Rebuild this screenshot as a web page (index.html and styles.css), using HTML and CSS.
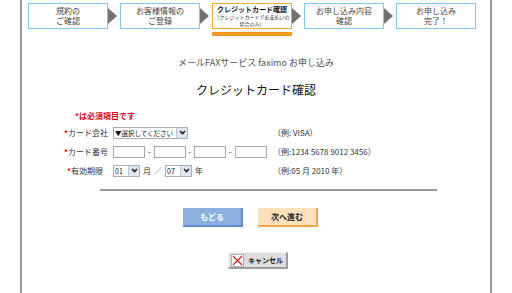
FILE: index.html
```html
<!DOCTYPE html>
<html lang="ja">

<head>
    <meta charset="UTF-8">
    <meta name="viewport" content="width=device-width, initial-scale=1.0">
    <title>クレジットカード確認</title>
    <link rel="stylesheet" href="styles.css">
</head>

<body>
    <div class="page">
        <!-- Progress steps -->
        <ol class="steps">
            <li class="step">
                <div class="step-box">規約の<br>ご確認</div>
                <div class="step-bar"></div>
            </li>
            <li class="arrow"></li>
            <li class="step">
                <div class="step-box">お客様情報の<br>ご登録</div>
                <div class="step-bar"></div>
            </li>
            <li class="arrow"></li>
            <li class="step current">
                <div class="step-box">
                    <span class="step-title">クレジットカード確認</span>
                    <span class="step-sub">（クレジットカードでお支払いの<br>場合のみ）</span>
                </div>
                <div class="step-bar"></div>
            </li>
            <li class="arrow"></li>
            <li class="step">
                <div class="step-box">お申し込み内容<br>確認</div>
                <div class="step-bar"></div>
            </li>
            <li class="arrow"></li>
            <li class="step">
                <div class="step-box">お申し込み<br>完了！</div>
                <div class="step-bar"></div>
            </li>
        </ol>

        <p class="service">メールFAXサービス faximo お申し込み</p>
        <h1>クレジットカード確認</h1>

        <form class="card-form" onsubmit="return false;">
            <p class="required-note"><span class="mark">*</span>は必須項目です</p>

            <div class="row">
                <span class="label"><span class="mark">*</span>カード会社</span>
                <div class="field">
                    <span class="select select-card">
                        <span class="select-text">▼選択してください</span>
                        <span class="select-btn"><svg width="7" height="5" viewBox="0 0 7 5"><path d="M1 1 L3.5 3.6 L6 1" fill="none" stroke="#222" stroke-width="1.6"/></svg></span>
                    </span>
                </div>
                <span class="example">（例: VISA）</span>
            </div>

            <div class="row">
                <span class="label"><span class="mark">*</span>カード番号</span>
                <div class="field">
                    <input class="num" type="text">
                    <span class="dash">-</span>
                    <input class="num" type="text">
                    <span class="dash">-</span>
                    <input class="num" type="text">
                    <span class="dash">-</span>
                    <input class="num" type="text">
                </div>
                <span class="example">（例:1234 5678 9012 3456）</span>
            </div>

            <div class="row">
                <span class="label"><span class="mark">*</span>有効期限</span>
                <div class="field field-date">
                    <span class="select select-small">
                        <span class="select-text">01</span>
                        <span class="select-btn"><svg width="7" height="5" viewBox="0 0 7 5"><path d="M1 1 L3.5 3.6 L6 1" fill="none" stroke="#222" stroke-width="1.6"/></svg></span>
                    </span>
                    <span class="unit">月</span>
                    <span class="slash">／</span>
                    <span class="select select-small">
                        <span class="select-text">07</span>
                        <span class="select-btn"><svg width="7" height="5" viewBox="0 0 7 5"><path d="M1 1 L3.5 3.6 L6 1" fill="none" stroke="#222" stroke-width="1.6"/></svg></span>
                    </span>
                    <span class="unit">年</span>
                </div>
                <span class="example">（例:05 月 2010 年）</span>
            </div>
        </form>

        <hr class="divider">

        <div class="actions">
            <button type="button" class="btn btn-back">もどる</button>
            <button type="button" class="btn btn-next">次へ進む</button>
        </div>

        <div class="cancel-row">
            <button type="button" class="btn btn-cancel">
                <span class="cancel-icon"><svg width="11" height="11" viewBox="0 0 11 11"><path d="M1 1 L10 10 M10 1 L1 10" stroke="#e8141c" stroke-width="1.2"/></svg></span>
                <span>キャンセル</span>
            </button>
        </div>
    </div>
</body>

</html>
```

FILE: styles.css
```css
/* General Styles */
body {
    margin: 0;
    font-family: "Noto Sans CJK JP", "Liberation Sans", sans-serif;
    color: #333;
    background-color: #fff;
}

.page {
    margin: 0 20px;
    min-height: 293px;
    box-sizing: border-box;
    border-left: 2px solid #9a9a9a;
    border-right: 2px solid #9a9a9a;
}

/* Progress steps */
.steps {
    display: flex;
    align-items: flex-start;
    list-style: none;
    margin: 0;
    padding: 3px 0 0 6px;
}

.step {
    width: 80px;
}

.step-box {
    height: 26px;
    box-sizing: border-box;
    border: 1px solid #7ccbe8;
    display: flex;
    flex-direction: column;
    justify-content: center;
    align-items: center;
    text-align: center;
    font-size: 8px;
    line-height: 10px;
    color: #444;
    white-space: nowrap;
}

.step.current .step-box {
    border-color: #f5a733;
}

.step-title {
    color: #111;
    font-size: 7px;
    font-weight: bold;
    line-height: 8px;
}

.step-sub {
    font-size: 5px;
    line-height: 7px;
    color: #333;
}

.step-bar {
    height: 4px;
    margin-top: 3px;
}

.step.current .step-bar {
    background-color: #f19a1f;
}

.arrow {
    width: 0;
    height: 0;
    margin: 5px 3px 0 0;
    border-top: 8px solid transparent;
    border-bottom: 8px solid transparent;
    border-left: 9px solid #727272;
}

/* Headings */
.service {
    margin: 21px 0 0;
    text-align: center;
    font-size: 9px;
    line-height: 12px;
    color: #555;
}

h1 {
    margin: 13px 0 0;
    text-align: center;
    font-size: 12px;
    line-height: 16px;
    font-weight: normal;
    color: #111;
}

/* Form */
.card-form {
    margin-top: 12px;
    padding-left: 42px;
}

.required-note {
    margin: 0 0 5px 11px;
    font-size: 8px;
    line-height: 11px;
    font-weight: bold;
    color: #e60012;
}

.mark {
    color: #e60012;
    font-weight: bold;
}

.row {
    display: grid;
    grid-template-columns: 49px 160px 1fr;
    align-items: center;
    height: 13px;
    margin-bottom: 6px;
    font-size: 8px;
}

.label {
    text-align: right;
    padding-right: 10px;
    color: #333;
    white-space: nowrap;
}

.field {
    display: flex;
    align-items: center;
}

.example {
    color: #333;
    white-space: nowrap;
}

.select {
    display: inline-flex;
    align-items: center;
    height: 12px;
    box-sizing: border-box;
    border: 1px solid #a6adb7;
    background-color: #fff;
    color: #111;
    font-size: 7px;
}

.select-card {
    width: 75px;
    font-size: 6.5px;
}

.select-small {
    width: 27px;
}

.select-text {
    flex: 1;
    padding-left: 1px;
    white-space: nowrap;
    overflow: hidden;
}

.select-btn {
    width: 10px;
    height: 100%;
    display: flex;
    align-items: center;
    justify-content: center;
    background-color: #dfe6f1;
    border-left: 1px solid #b9c4d6;
}

input.num {
    width: 32px;
    height: 12px;
    box-sizing: border-box;
    margin: 0;
    padding: 0;
    border: 1px solid #a5a5a5;
    background-color: #fff;
}

.dash {
    width: 8.5px;
    text-align: center;
}

.field-date .unit {
    margin: 0 3px;
}

.slash {
    margin-right: 3px;
    color: #555;
}

.divider {
    margin: 12px 0 0 78px;
    width: 337px;
    height: 0;
    border: 0;
    border-top: 2px solid #9a9a9a;
}

/* Buttons */
.actions {
    display: flex;
    gap: 15px;
    margin-top: 17px;
    padding-left: 161px;
}

.btn {
    width: 60px;
    height: 19px;
    box-sizing: border-box;
    margin: 0;
    padding: 0;
    font-family: inherit;
    font-size: 8px;
    font-weight: bold;
    border: 0;
    cursor: pointer;
}

.btn-back {
    background-color: #8cafdd;
    border-right: 2px solid #5c8dd2;
    border-bottom: 2px solid #5c8dd2;
    color: #fff;
}

.btn-next {
    background-color: #ffe2bb;
    border-right: 2px solid #f2a64a;
    border-bottom: 2px solid #f2a64a;
    color: #222;
}

.cancel-row {
    margin-top: 25px;
    padding-left: 206px;
}

.btn-cancel {
    display: flex;
    align-items: center;
    height: 17px;
    padding-left: 2px;
    font-size: 7px;
    white-space: nowrap;
    background-color: #dedede;
    border-top: 1px solid #f2f2f2;
    border-left: 1px solid #f2f2f2;
    border-right: 2px solid #9c9c9c;
    border-bottom: 2px solid #9c9c9c;
    color: #222;
}

.cancel-icon {
    display: flex;
    align-items: center;
    justify-content: center;
    width: 13px;
    height: 13px;
    margin-right: 4px;
    background-color: #fff;
    border: 1px solid #b0b0b0;
    box-sizing: border-box;
}
```
